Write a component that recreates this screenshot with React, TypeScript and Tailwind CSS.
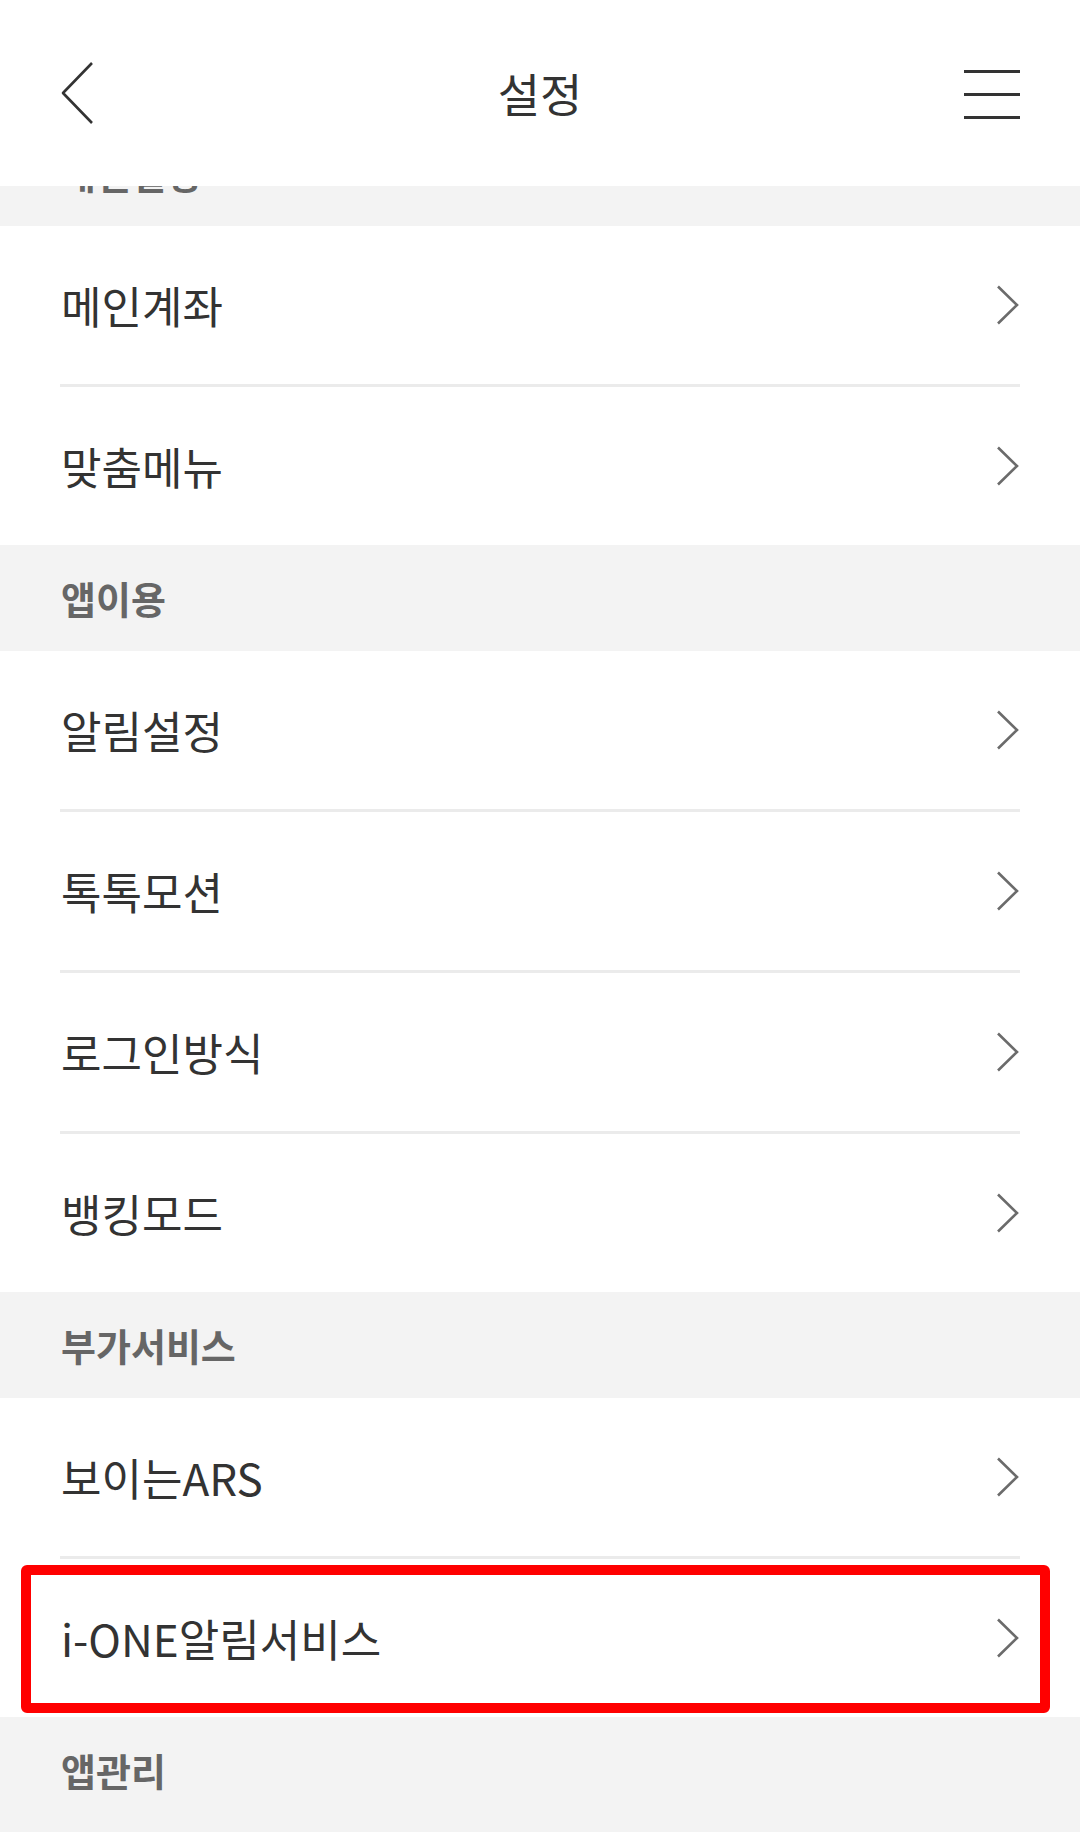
import { ReactNode } from "react";

const FONT = "font-['Noto_Sans_CJK_KR','Noto_Sans',sans-serif]";

function Chevron() {
    return (
        <svg width="24" height="40" viewBox="0 0 24 40" fill="none" className="shrink-0">
            <polyline points="2,1.5 21,20 2,38.5" stroke="#6b6b6b" strokeWidth="2.6" />
        </svg>
    );
}

function Row({ label, divider = true, children }: { label: string; divider?: boolean; children?: ReactNode }) {
    return (
        <div className="relative bg-white px-[60px]">
            <div className="flex h-[158px] items-center justify-between">
                <span className="pl-[1px] text-[44px] leading-none text-[#333333]">{label}</span>
                <Chevron />
            </div>
            {divider && <div className="h-[3px] bg-[#ebebeb]" />}
            {children}
        </div>
    );
}

function SectionTitle({ title }: { title: string }) {
    return (
        <div className="flex h-[106px] items-center bg-[#f3f3f3] px-[61px]">
            <span className="text-[38px] font-bold leading-none text-[#666666]">{title}</span>
        </div>
    );
}

export default function App() {
    return (
        <div className={`${FONT} min-h-[1832px] w-[1080px] overflow-hidden bg-[#f3f3f3]`}>
            {/* Header */}
            <div className="relative flex h-[186px] items-center justify-between bg-white px-[60px]">
                <svg width="34" height="62" viewBox="0 0 34 62" fill="none">
                    <polyline points="32,1 3,31 32,61" stroke="#333333" strokeWidth="2.6" strokeLinejoin="round" />
                </svg>
                <h1 className="absolute left-1/2 top-[92px] -translate-x-1/2 -translate-y-1/2 text-[46px] leading-none text-[#333333]">
                    설정
                </h1>
                <div className="flex w-[56px] flex-col gap-[20px] pt-[2px]">
                    <div className="h-[3px] bg-[#333333]" />
                    <div className="h-[3px] bg-[#333333]" />
                    <div className="h-[3px] bg-[#333333]" />
                </div>
            </div>

            {/* partially scrolled section */}
            <div className="flex h-[40px] flex-col justify-end overflow-hidden">
                <div className="shrink-0">
                    <SectionTitle title="개인설정" />
                </div>
            </div>

            <Row label="메인계좌" />
            <Row label="맞춤메뉴" divider={false} />

            <SectionTitle title="앱이용" />
            <Row label="알림설정" />
            <Row label="톡톡모션" />
            <Row label="로그인방식" />
            <Row label="뱅킹모드" divider={false} />

            <SectionTitle title="부가서비스" />
            <Row label="보이는ARS" />
            <Row label="i-ONE알림서비스" divider={false}>
                <div className="pointer-events-none absolute bottom-[4px] left-[21px] right-[30px] top-[6px] rounded-[6px] border-[10px] border-[#ff0000]" />
            </Row>

            <SectionTitle title="앱관리" />
        </div>
    );
}
